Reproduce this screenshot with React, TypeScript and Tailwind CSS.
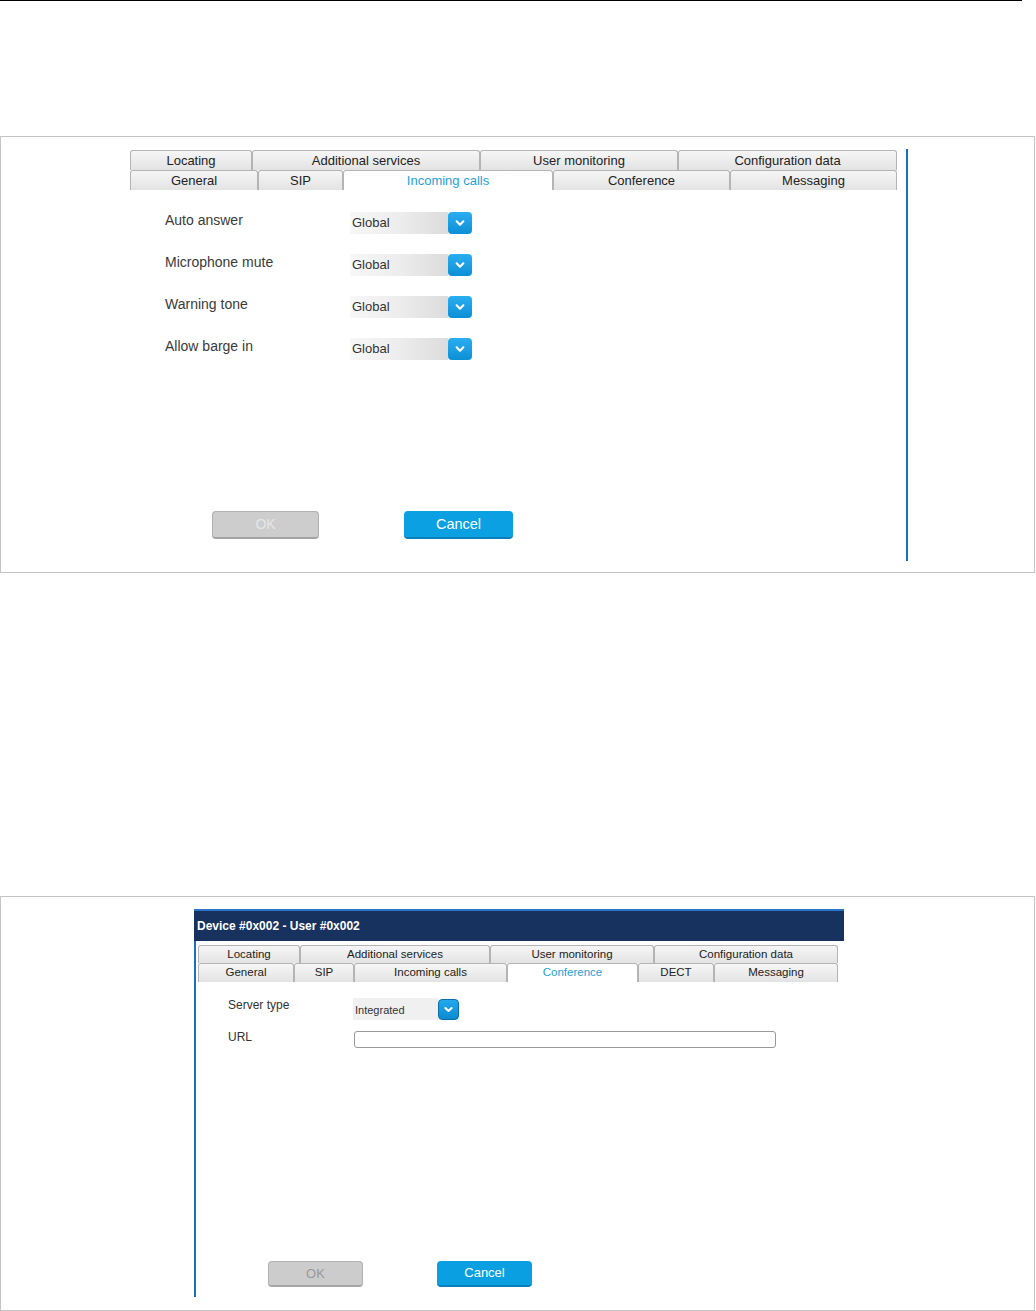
import React from 'react';

type Tab = { label: string; w: string; active?: boolean };

const bigTop: Tab[] = [
  { label: 'Locating', w: 'w-[122px]' },
  { label: 'Additional services', w: 'w-[228px]' },
  { label: 'User monitoring', w: 'w-[198px]' },
  { label: 'Configuration data', w: 'w-[219px]' },
];

const bigBottom: Tab[] = [
  { label: 'General', w: 'w-[128px]' },
  { label: 'SIP', w: 'w-[85px]' },
  { label: 'Incoming calls', w: 'w-[210px]', active: true },
  { label: 'Conference', w: 'w-[177px]' },
  { label: 'Messaging', w: 'w-[167px]' },
];

const smallTop: Tab[] = [
  { label: 'Locating', w: 'w-[102px]' },
  { label: 'Additional services', w: 'w-[190px]' },
  { label: 'User monitoring', w: 'w-[164px]' },
  { label: 'Configuration data', w: 'w-[184px]' },
];

const smallBottom: Tab[] = [
  { label: 'General', w: 'w-[96px]' },
  { label: 'SIP', w: 'w-[60px]' },
  { label: 'Incoming calls', w: 'w-[153px]' },
  { label: 'Conference', w: 'w-[131px]', active: true },
  { label: 'DECT', w: 'w-[76px]' },
  { label: 'Messaging', w: 'w-[124px]' },
];

const TabRow = ({ tabs, h, text }: { tabs: Tab[]; h: string; text: string }) => (
  <div className={`flex ${h}`}>
    {tabs.map((t) => (
      <div
        key={t.label}
        className={`${t.w} flex items-center justify-center border border-b-0 border-[#b4b4b4] rounded-t-[3px] ${text} ${
          t.active ? 'bg-white text-[#1f9fd8]' : 'bg-linear-to-b from-[#f6f6f6] to-[#e3e3e3] text-[#222]'
        }`}
      >
        {t.label}
      </div>
    ))}
  </div>
);

const Chevron = ({ size }: { size: number }) => (
  <svg width={size} height={size} viewBox="0 0 24 24" fill="none">
    <polyline points="7,9.5 12,14.5 17,9.5" stroke="white" strokeWidth="3.2" strokeLinecap="round" strokeLinejoin="round" />
  </svg>
);

const DropBig = () => (
  <div className="flex items-center">
    <div className="w-[98px] h-[22px] flex items-center pl-[2px] text-[13px] text-[#333] bg-linear-to-r from-[#f7f7f7] via-[#ededed] to-[#dcdcdc]">
      Global
    </div>
    <div className="w-[24px] h-[22px] rounded-[4px] bg-linear-to-b from-[#29aef0] to-[#0b8fd6] flex items-center justify-center">
      <Chevron size={16} />
    </div>
  </div>
);

export default function App() {
  const bigRows = ['Auto answer', 'Microphone mute', 'Warning tone', 'Allow barge in'];

  return (
    <div className="w-[1036px] h-[1311px] bg-white font-['Liberation_Sans',Arial,sans-serif] overflow-hidden">
      <div className="h-px w-[1022px] bg-black" />

      {/* first screenshot: Incoming calls tab */}
      <div className="mt-[135px] w-[1035px] h-[437px] border border-[#c4c4c4] pl-[129px] pt-[12px]">
        <div className="w-[778px] h-[412px] border-r-2 border-[#1a6fc4] pt-px">
          <TabRow tabs={bigTop} h="h-[20px]" text="text-[13px]" />
          <TabRow tabs={bigBottom} h="h-[20px]" text="text-[13px]" />

          <div className="mt-[22px] flex flex-col gap-[20px]">
            {bigRows.map((label) => (
              <div key={label} className="flex items-center h-[22px]">
                <div className="w-[220px] pl-[35px] pb-[6px] text-[14px] text-[#3a3a3a]">{label}</div>
                <DropBig />
              </div>
            ))}
          </div>

          <div className="mt-[151px] flex">
            <div className="ml-[82px] w-[107px] h-[28px] rounded-[4px] bg-[#cdcdcd] border border-[#b0b0b0] border-b-2 border-b-[#a4a4a4] flex items-center justify-center text-[14px] text-[#e6e6e6]">
              OK
            </div>
            <div className="ml-[85px] w-[109px] h-[28px] rounded-[4px] bg-[#0ba0e2] border-b-2 border-[#0a7fba] flex items-center justify-center pt-[2px] text-[14.5px] text-white">
              Cancel
            </div>
          </div>
        </div>
      </div>

      {/* second screenshot: Conference tab */}
      <div className="mt-[323px] w-[1035px] h-[415px] border border-[#c4c4c4] pl-[193px] pt-[12px]">
        <div className="w-[650px] h-[32px] bg-[#17325f] border-t-2 border-[#2c74c6] flex items-center pl-[3px] text-[12px] font-bold text-white">
          Device #0x002 - User #0x002
        </div>
        <div className="h-[356px] w-[650px] border-l-2 border-[#1a6fc4] pl-[2px] pt-[4px]">
          <TabRow tabs={smallTop} h="h-[18px]" text="text-[11.5px]" />
          <TabRow tabs={smallBottom} h="h-[19px]" text="text-[11.5px]" />

          <div className="mt-[16px] flex items-center h-[22px]">
            <div className="w-[155px] pl-[30px] pb-[8px] text-[12px] text-[#333]">Server type</div>
            <div className="w-[85px] h-[22px] bg-[#f0f0f0] flex items-center pl-[2px] pt-[2px] text-[11px] text-[#333]">
              Integrated
            </div>
            <div className="w-[21px] h-[21px] rounded-[4px] bg-linear-to-b from-[#22a8ec] to-[#0a8ad0] border border-[#0a6fa8] flex items-center justify-center">
              <Chevron size={15} />
            </div>
          </div>

          <div className="mt-[11px] flex items-center h-[17px]">
            <div className="w-[156px] pl-[30px] pb-[5px] text-[12px] text-[#333]">URL</div>
            <div className="w-[422px] h-[17px] rounded-[3px] border border-[#9a9a9a] bg-white" />
          </div>

          <div className="mt-[213px] flex">
            <div className="ml-[70px] w-[95px] h-[26px] rounded-[4px] bg-[#cccccc] border border-[#b2b2b2] border-b-2 border-b-[#a6a6a6] flex items-center justify-center text-[13px] text-[#999]">
              OK
            </div>
            <div className="ml-[74px] w-[95px] h-[26px] rounded-[4px] bg-[#0a9fe0] border-b-2 border-[#0a80bb] flex items-center justify-center text-[13px] text-white">
              Cancel
            </div>
          </div>
        </div>
      </div>
    </div>
  );
}
